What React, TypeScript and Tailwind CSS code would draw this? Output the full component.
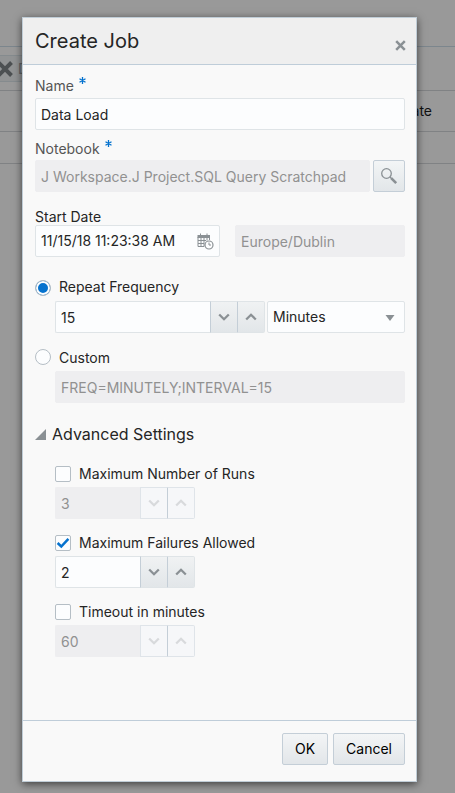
import React, { useState } from "react";

const fieldBase =
  "h-8 w-full min-w-0 rounded-[2px] px-[5px] text-sm outline-none";
const fieldActive = "border border-[#dfe4e7] bg-[#fcfdfe] text-[#252525]";
const fieldDisabled = "border border-[#eeeef0] bg-[#eeeef0] text-[#919191]";
const buttonFace =
  "border-[#c4ced7] bg-linear-to-b from-[#f3f5f6] to-[#e2e6e9]";

function Chevron({ up, faded }: { up?: boolean; faded?: boolean }) {
  return (
    <svg width="12" height="8" viewBox="0 0 12 8" fill="none" aria-hidden="true">
      <path
        d={up ? "M1.2 6.500 6 1.800l4.800 4.700" : "M1.200 1.500 6 6.200l4.800-4.700"}
        stroke={faded ? "#d8dadc" : "#8a9094"}
        strokeWidth="2.300"
      />
    </svg>
  );
}

function Spinner({
  label,
  initial,
  disabled,
  className,
}: {
  label: string;
  initial: number;
  disabled?: boolean;
  className: string;
}) {
  const [value, setValue] = useState(initial);
  const face = disabled
    ? "border-[#dfe4e9] bg-[#f6f7f9]"
    : "border-[#dfe4e7] bg-linear-to-b from-[#f0f2f3] to-[#e2e6e9]";
  return (
    <div className={`flex h-8 ${className}`}>
      <input
        type="text"
        inputMode="numeric"
        aria-label={label}
        disabled={disabled}
        value={value}
        onChange={(e) => setValue(Number(e.target.value) || 0)}
        className={`h-8 min-w-0 flex-1 rounded-l-[2px] border-y border-l px-[5px] text-sm outline-none ${
          disabled
            ? "border-[#eeeef0] bg-[#eeeef0] text-[#919191]"
            : "border-[#dfe4e7] bg-[#fcfdfe] text-[#252525]"
        }`}
      />
      <button
        type="button"
        aria-label={`Decrease ${label}`}
        disabled={disabled}
        onClick={() => setValue(value - 1)}
        className={`flex w-[27px] items-center justify-center border-y border-l ${face} ${
          disabled ? "" : "border-l-[#c4ced7]"
        }`}
      >
        <Chevron faded={disabled} />
      </button>
      <button
        type="button"
        aria-label={`Increase ${label}`}
        disabled={disabled}
        onClick={() => setValue(value + 1)}
        className={`flex w-7 items-center justify-center rounded-r-[2px] border ${face} border-l-[#c4ced7]`}
      >
        <Chevron up faded={disabled} />
      </button>
    </div>
  );
}

function Required() {
  return (
    <svg className="mb-3 ml-[5px]" width="7" height="7" viewBox="0 0 7 7" aria-hidden="true">
      <path d="M3.500 0v7M.5 1.700l6 3.600M6.500 1.700l-6 3.600" stroke="#0572ce" strokeWidth="1.300" />
    </svg>
  );
}

function LimitOption({
  id,
  label,
  value,
  defaultOn,
}: {
  id: string;
  label: string;
  value: number;
  defaultOn?: boolean;
}) {
  const [on, setOn] = useState(Boolean(defaultOn));
  return (
    <div>
      <div className="mb-[5px] flex h-4 items-center gap-2">
        <span className="relative flex">
          <input
            id={id}
            type="checkbox"
            checked={on}
            onChange={(e) => setOn(e.target.checked)}
            className="size-4 appearance-none rounded-[2px] border border-[#b5bec5] bg-[#fcfdfe]"
          />
          {on && (
            <svg
              className="pointer-events-none absolute inset-0"
              width="16"
              height="16"
              viewBox="0 0 16 16"
              fill="none"
              aria-hidden="true"
            >
              <path d="m2.600 8 3.700 3.500 7.100-7.700" stroke="#0572ce" strokeWidth="2.500" />
            </svg>
          )}
        </span>
        <label htmlFor={id}>{label}</label>
      </div>
      <Spinner label={label} initial={value} disabled={!on} className="w-[140px]" />
    </div>
  );
}

function Backdrop() {
  return (
    <div className="bg-[#999] text-sm text-[#111]" aria-hidden="true">
      <div className="h-[47px] border-b border-[#7c868d]" />
      <div className="mt-2 flex h-[27px] w-24 items-center border-y border-[#858b8e] bg-[#919394]">
        <svg className="-ml-[4px] shrink-0" width="18" height="18" viewBox="0 0 18 18">
          <path d="m2.500 2.500 13 13M15.500 2.500l-13 13" stroke="#4c5052" strokeWidth="4" />
        </svg>
        <span className="ml-1 text-[#606466]">Delete</span>
      </div>
      <div className="mt-2 flex h-[42px] items-center justify-end border-y border-[#808284] pr-[23px]">
        Start Date
      </div>
      <div className="h-8 border-b border-[#808284]" />
    </div>
  );
}

export default function App() {
  const [mode, setMode] = useState("repeat");
  const radio =
    "size-4 shrink-0 appearance-none rounded-full border border-[#b5bec5] bg-[#fcfdfe] checked:bg-[#0572ce] checked:shadow-[inset_0_0_0_2px_#fcfdfe]";
  return (
    <div className="relative min-h-screen bg-[#999] font-['Inter','Liberation_Sans',sans-serif] text-sm text-[#252525]">
      <Backdrop />
      <div className="absolute inset-0 flex min-h-screen pt-[17px] pr-[38px] pb-[11px] pl-[22px]">
        <form
          role="dialog"
          aria-labelledby="dialog-title"
          onSubmit={(e) => e.preventDefault()}
          className="flex min-w-0 flex-1 flex-col border border-[#c0cdd7] bg-[#f9f9f9] shadow-[0_2px_8px_rgba(0,0,0,0.6)]"
        >
          <header className="flex h-[47px] shrink-0 items-center justify-between border-b border-[#bfcdd9] bg-[#efefef] pr-[10px] pl-3">
            <h1 id="dialog-title" className="text-xl">
              Create Job
            </h1>
            <button type="button" aria-label="Close" className="mt-2">
              <svg width="11" height="11" viewBox="0 0 11 11" aria-hidden="true">
                <path d="m1.200 1.200 8.600 8.600M9.800 1.200 1.200 9.800" stroke="#8a9094" strokeWidth="2.500" />
              </svg>
            </button>
          </header>

          <main className="flex-1 pt-[9px] pr-[11px] pb-8 pl-3">
            <div className="flex h-6 items-center text-[#555]">
              <label htmlFor="name">Name</label>
              <Required />
            </div>
            <input id="name" required defaultValue="Data Load" className={`block ${fieldBase} ${fieldActive}`} />

            <div className="mt-2 flex h-[22px] items-center text-[#555]">
              <label htmlFor="notebook">Notebook</label>
              <Required />
            </div>
            <div className="flex gap-[3px]">
              <input
                id="notebook"
                disabled
                value="J Workspace.J Project.SQL Query Scratchpad"
                className={`${fieldBase} ${fieldDisabled}`}
              />
              <button
                type="button"
                aria-label="Search notebooks"
                className={`flex size-8 shrink-0 items-center justify-center rounded-[2px] border ${buttonFace}`}
              >
                <svg width="18" height="18" viewBox="0 0 18 18" fill="none" aria-hidden="true">
                  <circle cx="6.500" cy="6.500" r="4.800" stroke="#8a9094" strokeWidth="1.300" />
                  <path d="m10 10 2 2" stroke="#8a9094" strokeWidth="1.300" />
                  <path d="m11.200 11.200 5 5" stroke="#8a9094" strokeWidth="2.600" />
                </svg>
              </button>
            </div>

            <label htmlFor="start" className="mt-[17px] block h-4 leading-4">
              Start Date
            </label>
            <div className="flex gap-[15px]">
              <div className={`flex h-8 min-w-0 flex-1 items-center rounded-[2px] ${fieldActive}`}>
                <input
                  id="start"
                  defaultValue="11/15/18 11:23:38 AM"
                  className="min-w-0 flex-1 bg-transparent pl-[5px] outline-none"
                />
                <button type="button" aria-label="Select date and time" className="mr-[5px] shrink-0">
                  <svg width="17" height="17" viewBox="0 0 17 17" fill="none" aria-hidden="true">
                    <path d="M.5 2h12.500v3H.5z" fill="#8a9094" />
                    <path
                      d="M3.500.5V3M10 .5V3M1 4v9.500h6M4 4v9.500M7 4v9.500M10 4v3.500M12.500 4v3M1 7.500h8M1 10.500h6"
                      stroke="#8a9094"
                    />
                    <circle cx="12" cy="12" r="4" fill="#fcfdfe" stroke="#8a9094" strokeWidth="1.200" />
                    <path d="M12 9.500V12h2" stroke="#8a9094" />
                  </svg>
                </button>
              </div>
              <div className="w-[170px] shrink-0">
                <input aria-label="Time zone" disabled value="Europe/Dublin" className={`${fieldBase} ${fieldDisabled}`} />
              </div>
            </div>

            <div className="mt-[23px] mb-[5px] flex h-4 gap-2 leading-[14px]">
              <input
                id="repeat"
                type="radio"
                name="mode"
                checked={mode === "repeat"}
                onChange={() => setMode("repeat")}
                className={radio}
              />
              <label htmlFor="repeat">Repeat Frequency</label>
            </div>
            <div className="ml-5 flex gap-[2px]">
              <Spinner label="Repeat interval" initial={15} className="min-w-0 flex-1" />
              <div className="relative w-[138px]">
                <select
                  aria-label="Interval unit"
                  defaultValue="Minutes"
                  className={`appearance-none ${fieldBase} ${fieldActive}`}
                >
                  <option>Minutes</option>
                  <option>Hours</option>
                  <option>Days</option>
                </select>
                <svg
                  className="pointer-events-none absolute top-[14px] right-[10px]"
                  width="10"
                  height="6"
                  viewBox="0 0 10 6"
                  aria-hidden="true"
                >
                  <path d="M.5 0h9L5 6z" fill="#8a9094" />
                </svg>
              </div>
            </div>

            <div className="mt-4 mb-[6px] flex h-4 gap-2 leading-[18px]">
              <input
                id="custom"
                type="radio"
                name="mode"
                checked={mode === "custom"}
                onChange={() => setMode("custom")}
                className={radio}
              />
              <label htmlFor="custom">Custom</label>
            </div>
            <div className="ml-5">
              <input
                aria-label="Custom frequency"
                disabled
                value="FREQ=MINUTELY;INTERVAL=15"
                className={`block ${fieldBase} ${fieldDisabled}`}
              />
            </div>

            <section>
              <h2 className="mt-[21px] text-base leading-5">
                <button type="button" aria-expanded="true" className="flex h-5 items-center gap-[6px]">
                  <svg width="11" height="11" viewBox="0 0 11 11" aria-hidden="true">
                    <path d="M11 0v11H0z" fill="#8a9094" />
                  </svg>
                  Advanced Settings
                </button>
              </h2>
              <div className="mt-[22px] ml-5 flex flex-col gap-4">
                <LimitOption id="runs" label="Maximum Number of Runs" value={3} />
                <LimitOption id="failures" label="Maximum Failures Allowed" value={2} defaultOn />
                <LimitOption id="timeout" label="Timeout in minutes" value={60} />
              </div>
            </section>
          </main>

          <footer className="flex h-[61px] shrink-0 justify-end gap-[5px] border-t border-[#bfcdd9] pt-3 pr-[11px] text-black">
            <button type="submit" className={`h-8 rounded-[2px] border px-3 ${buttonFace}`}>
              OK
            </button>
            <button type="button" className={`h-8 rounded-[2px] border px-3 ${buttonFace}`}>
              Cancel
            </button>
          </footer>
        </form>
      </div>
    </div>
  );
}
